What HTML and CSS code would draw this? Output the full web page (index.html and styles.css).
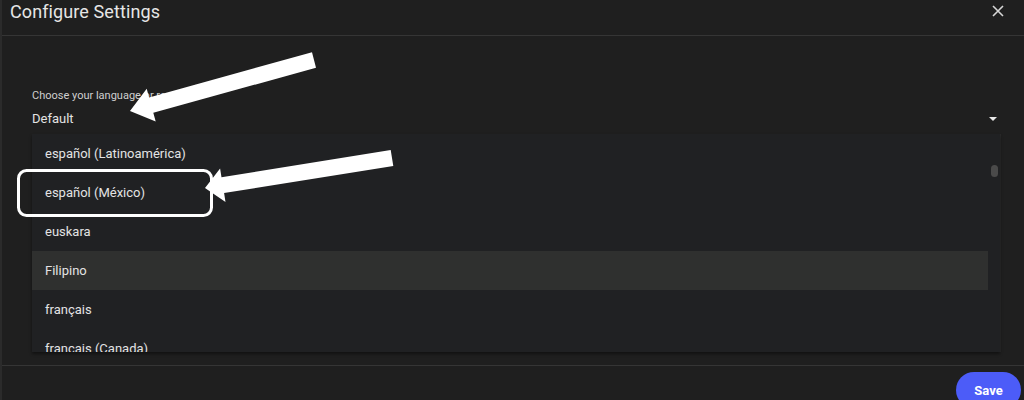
FILE: index.html
```html
<!DOCTYPE html>
<html lang="en">
<head>
<meta charset="utf-8">
<title>Configure Settings</title>
<link rel="stylesheet" href="styles.css">
</head>
<body>
<div class="dialog">
  <header class="dialog-header">
    <h1 class="dialog-title">Configure Settings</h1>
    <button class="close-btn" aria-label="Close">
      <svg width="12" height="12" viewBox="0 0 12 12"><path d="M1 1L11 11M11 1L1 11" stroke="#d6d6d6" stroke-width="1.6" fill="none"/></svg>
    </button>
  </header>
  <main class="dialog-body">
    <div class="field-label">Choose your language or region</div>
    <div class="select-row">
      <span class="select-value">Default</span>
      <span class="select-caret"></span>
    </div>
    <div class="menu">
      <ul class="menu-list">
        <li class="menu-item">español (Latinoamérica)</li>
        <li class="menu-item">español (México)</li>
        <li class="menu-item">euskara</li>
        <li class="menu-item is-hover">Filipino</li>
        <li class="menu-item">français</li>
        <li class="menu-item">français (Canada)</li>
      </ul>
      <div class="menu-scroll"><div class="menu-thumb"></div></div>
    </div>
  </main>
  <footer class="dialog-footer">
    <button class="save-btn">Save</button>
  </footer>
</div>
<svg class="annotations" width="1024" height="400" viewBox="0 0 1024 400">
  <polygon fill="#ffffff" points="312,52.3 316,67.7 153.3,112.8 155.7,121.5 130,111 146.7,88.7 149.1,97.4"/>
  <polygon fill="#ffffff" points="390.7,150.1 393.3,165.9 224.1,193.1 225.5,202 205,188 220.1,168.4 221.5,177.3"/>
  <rect x="18.5" y="170.5" width="193" height="45" rx="8" ry="8" fill="none" stroke="#ffffff" stroke-width="3"/>
</svg>
</body>
</html>
```

FILE: styles.css
```css
html, body {
  margin: 0;
  padding: 0;
  width: 1024px;
  height: 400px;
  overflow: hidden;
  background: #1f1f1f;
  font-family: Roboto, "Liberation Sans", Arial, sans-serif;
  color: #e3e3e3;
}

.dialog {
  position: relative;
  height: 400px;
  border-left: 2px solid #2b2b2b;
  box-sizing: border-box;
  display: flex;
  flex-direction: column;
}

.dialog-header {
  height: 35px;
  border-bottom: 1px solid #353535;
  display: flex;
  align-items: flex-start;
  justify-content: space-between;
  flex-shrink: 0;
}

.dialog-title {
  margin: 0;
  padding-left: 8px;
  font-size: 18px;
  line-height: 24px;
  font-weight: 400;
  color: #e6e6e6;
  letter-spacing: 0.1px;
}

.close-btn {
  background: none;
  border: 0;
  padding: 0;
  margin: 5px 20px 0 0;
  width: 12px;
  height: 12px;
  display: flex;
}

.dialog-body {
  height: 329px;
  padding: 0 24px 0 30px;
  box-sizing: border-box;
  display: flex;
  flex-direction: column;
  flex-shrink: 0;
}

.field-label {
  margin-top: 52px;
  font-size: 11px;
  line-height: 16px;
  color: #cfcfcf;
}

.select-row {
  margin-top: 5px;
  height: 20px;
  display: flex;
  align-items: center;
  justify-content: space-between;
}

.select-value {
  font-size: 13px;
  line-height: 20px;
  color: #e3e3e3;
}

.select-caret {
  width: 0;
  height: 0;
  border-left: 4px solid transparent;
  border-right: 4px solid transparent;
  border-top: 4px solid #e8e8e8;
  margin-right: 3px;
}

.menu {
  margin-top: 5px;
  height: 218px;
  background: #202123;
  box-shadow: 0 2px 3px rgba(0, 0, 0, 0.45), 1px 0 0 #2a2a2a;
  display: flex;
  overflow: hidden;
}

.menu-list {
  list-style: none;
  margin: 0;
  padding: 0;
  flex: 1;
}

.menu-item {
  height: 39px;
  line-height: 39px;
  padding-left: 13px;
  font-size: 13px;
  color: #e3e3e3;
}

.menu-item.is-hover {
  background: #2f302f;
}

.menu-scroll {
  width: 12px;
  flex-shrink: 0;
  padding-top: 31px;
  display: flex;
  justify-content: center;
  align-items: flex-start;
}

.menu-thumb {
  width: 7px;
  height: 12px;
  border-radius: 4px;
  background: #4a4a4a;
}

.dialog-footer {
  border-top: 1px solid #353535;
  padding: 6px 3px 0 0;
  display: flex;
  justify-content: flex-end;
}

.save-btn {
  width: 65px;
  height: 36px;
  border: 0;
  border-radius: 18px;
  background: #4c5cf8;
  color: #ffffff;
  font-family: Roboto, "Liberation Sans", Arial, sans-serif;
  font-size: 13px;
  font-weight: 700;
  padding: 0;
}

.annotations {
  position: absolute;
  left: 0;
  top: 0;
  pointer-events: none;
}
```
